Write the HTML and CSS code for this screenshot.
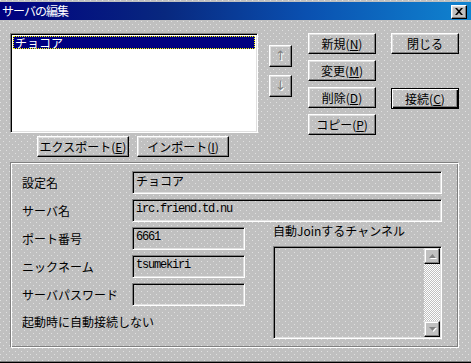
FILE: index.html
```html
<!DOCTYPE html>
<html lang="ja">
<head>
<meta charset="utf-8">
<title>サーバの編集</title>
<link rel="stylesheet" href="styles.css">
</head>
<body>
<div class="window">
  <div class="titlebar">
    <span class="title">サーバの編集</span>
    <button class="close" aria-label="閉じる">
      <svg width="8" height="7" viewBox="0 0 8 7"><path d="M0 0h2l2 2.2L6 0h2L5 3.5 8 7H6L4 4.8 2 7H0l3-3.5z" fill="#000"/></svg>
    </button>
  </div>

  <div class="top">
    <div class="list-col">
      <div class="listbox">
        <div class="item selected">チョコア</div>
      </div>
      <div class="io-row">
        <button class="btn io">エクスポート(<u>E</u>)</button>
        <button class="btn io">インポート(<u>I</u>)</button>
      </div>
    </div>
    <div class="arrow-col">
      <button class="btn arrow">↑</button>
      <button class="btn arrow">↓</button>
    </div>
    <div class="mid-col">
      <button class="btn cmd">新規(<u>N</u>)</button>
      <button class="btn cmd">変更(<u>M</u>)</button>
      <button class="btn cmd">削除(<u>D</u>)</button>
      <button class="btn cmd">コピー(<u>P</u>)</button>
    </div>
    <div class="right-col">
      <button class="btn cmd">閉じる</button>
      <button class="btn cmd default">接続(<u>C</u>)</button>
    </div>
  </div>

  <div class="group">
    <div class="row">
      <span class="label">設定名</span>
      <div class="field wide">チョコア</div>
    </div>
    <div class="row">
      <span class="label">サーバ名</span>
      <div class="field wide mono">irc.friend.td.nu</div>
    </div>
    <div class="lower">
      <div class="lower-left">
        <div class="row">
          <span class="label">ポート番号</span>
          <div class="field narrow mono">6661</div>
        </div>
        <div class="row">
          <span class="label">ニックネーム</span>
          <div class="field narrow mono">tsumekiri</div>
        </div>
        <div class="row">
          <span class="label">サーバパスワード</span>
          <div class="field narrow mono"></div>
        </div>
        <div class="note">起動時に自動接続しない</div>
      </div>
      <div class="channels">
        <div class="ch-label">自動Joinするチャンネル</div>
        <div class="ch-list">
          <div class="scrollbar">
            <div class="sb-btn">
              <svg width="7" height="5" viewBox="0 0 7 5"><path d="M3.5 0L7 4H0z" fill="#808080"/></svg>
            </div>
            <div class="sb-track"></div>
            <div class="sb-btn">
              <svg width="7" height="5" viewBox="0 0 7 5"><path d="M0 0h7L3.5 4z" fill="#808080"/></svg>
            </div>
          </div>
        </div>
      </div>
    </div>
  </div>
</div>
</body>
</html>
```

FILE: styles.css
```css
* { box-sizing: border-box; }

html, body {
  margin: 0;
  padding: 0;
}

body {
  width: 471px;
  height: 363px;
  overflow: hidden;
  font-family: "Noto Sans CJK JP", "Noto Sans", sans-serif;
  font-size: 12px;
  color: #000;
}

.window {
  width: 471px;
  height: 363px;
  padding-top: 2px;
  background-color: #c0c0c0;
  background-image:
    conic-gradient(from 270deg at 1px 1px, #e0e0e0 25%, transparent 0),
    conic-gradient(from 270deg at 1px 1px, #e0e0e0 25%, transparent 0);
  background-size: 6px 6px, 6px 6px;
  background-position: 0 0, 3px 3px;
  box-shadow: inset 0 -1px #000, inset 0 -2px #808080;
}

/* title bar */
.titlebar {
  height: 18px;
  display: flex;
  align-items: center;
  justify-content: space-between;
  padding: 0 4px 0 2px;
  background: linear-gradient(90deg, #000080 0%, #08287f 35%, #0a50b0 65%, #1084d0 100%);
}

.title {
  color: #fff;
  font-size: 12px;
  line-height: 18px;
  letter-spacing: -1px;
}

.close {
  width: 16px;
  height: 14px;
  padding: 0;
  margin-top: 1px;
  display: flex;
  align-items: center;
  justify-content: center;
  background: #c0c0c0;
  border: 1px solid;
  border-color: #fff #000 #000 #fff;
  box-shadow: inset -1px -1px #808080, inset 1px 1px #dfdfdf;
}

/* generic raised button */
.btn {
  padding: 0;
  background: transparent;
  font-family: "Noto Sans CJK JP", "Noto Sans", sans-serif;
  font-size: 12px;
  line-height: 14px;
  color: #000;
  border: 1px solid;
  border-color: #fff #000 #000 #fff;
  box-shadow: inset -1px -1px #808080, inset 1px 1px #dfdfdf;
  display: flex;
  align-items: center;
  justify-content: center;
}

.btn u { text-underline-offset: 1px; }

.btn.default {
  border-color: #000;
  box-shadow: inset 1px 1px #fff, inset -1px -1px #000, inset -2px -2px #808080;
}

/* top section */
.top {
  display: flex;
  align-items: flex-start;
  padding: 13px 0 0 10px;
}

.list-col {
  width: 248px;
}

.listbox {
  height: 100px;
  background: #fff;
  padding: 2px;
  border: 1px solid;
  border-color: #808080 #fff #fff #808080;
  box-shadow: inset 1px 1px #000, inset -1px -1px #dfdfdf;
}

.item {
  height: 13px;
  line-height: 13px;
  padding-left: 2px;
  white-space: nowrap;
}

.item.selected {
  background: #000080;
  color: #fff;
  outline: 1px dotted #ffff00;
  outline-offset: -1px;
}

.io-row {
  display: flex;
  gap: 8px;
  margin-top: 3px;
  padding-left: 27px;
}

.btn.io {
  width: 92px;
  height: 21px;
}

.arrow-col {
  display: flex;
  flex-direction: column;
  gap: 8px;
  margin: 12px 0 0 11px;
}

.btn.arrow {
  width: 23px;
  height: 22px;
  color: #808080;
  text-shadow: 1px 1px #fff;
  font-size: 13px;
  font-family: "DejaVu Sans", sans-serif;
}

.mid-col {
  display: flex;
  flex-direction: column;
  gap: 6px;
  margin-left: 16px;
}

.btn.cmd {
  width: 68px;
  height: 21px;
}

.right-col {
  display: flex;
  flex-direction: column;
  gap: 34px;
  margin-left: 15px;
}

/* group box */
.group {
  width: 449px;
  height: 186px;
  margin: 5px 0 0 10px;
  padding: 8px 14px 0 11px;
  border: 1px solid;
  border-color: #808080 #fff #fff #808080;
  box-shadow: inset 1px 1px #fff, inset -1px -1px #808080;
}

.row {
  display: flex;
  align-items: center;
  height: 23px;
  margin-bottom: 5px;
}

.label {
  width: 110px;
  flex: none;
  line-height: 16px;
  white-space: nowrap;
}

.field {
  height: 23px;
  padding: 1px 0 0 3px;
  line-height: 16px;
  white-space: nowrap;
  overflow: hidden;
  border: 1px solid;
  border-color: #808080 #fff #fff #808080;
  box-shadow: inset 1px 1px #000, inset -1px -1px #dfdfdf;
}

.field.wide { width: 310px; }
.field.narrow { width: 113px; }

.field.mono {
  font-family: "Liberation Mono", "DejaVu Sans Mono", monospace;
  font-size: 12px;
  letter-spacing: -1.2px;
}

.lower {
  display: flex;
}

.lower-left {
  width: 223px;
  flex: none;
}

.note {
  margin-top: 8px;
  line-height: 16px;
  white-space: nowrap;
}

.channels {
  margin-left: 28px;
  width: 169px;
}

.ch-label {
  margin-top: -2px;
  line-height: 12px;
  white-space: nowrap;
}

.ch-list {
  margin-top: 9px;
  width: 169px;
  height: 93px;
  padding: 1px 1px 1px 2px;
  display: flex;
  justify-content: flex-end;
  border: 1px solid;
  border-color: #808080 #fff #fff #808080;
  box-shadow: inset 1px 1px #000, inset -1px -1px #dfdfdf;
}

.scrollbar {
  width: 16px;
  display: flex;
  flex-direction: column;
}

.sb-btn {
  height: 16px;
  flex: none;
  display: flex;
  align-items: center;
  justify-content: center;
  background: #c0c0c0;
  border: 1px solid;
  border-color: #dfdfdf #000 #000 #dfdfdf;
  box-shadow: inset -1px -1px #808080, inset 1px 1px #fff;
}

.sb-btn svg { filter: drop-shadow(1px 1px 0 #fff); }

.sb-track {
  flex: 1;
  background: repeating-conic-gradient(#c0c0c0 0 25%, #fff 0 50%) 0 0 / 2px 2px;
}
```
